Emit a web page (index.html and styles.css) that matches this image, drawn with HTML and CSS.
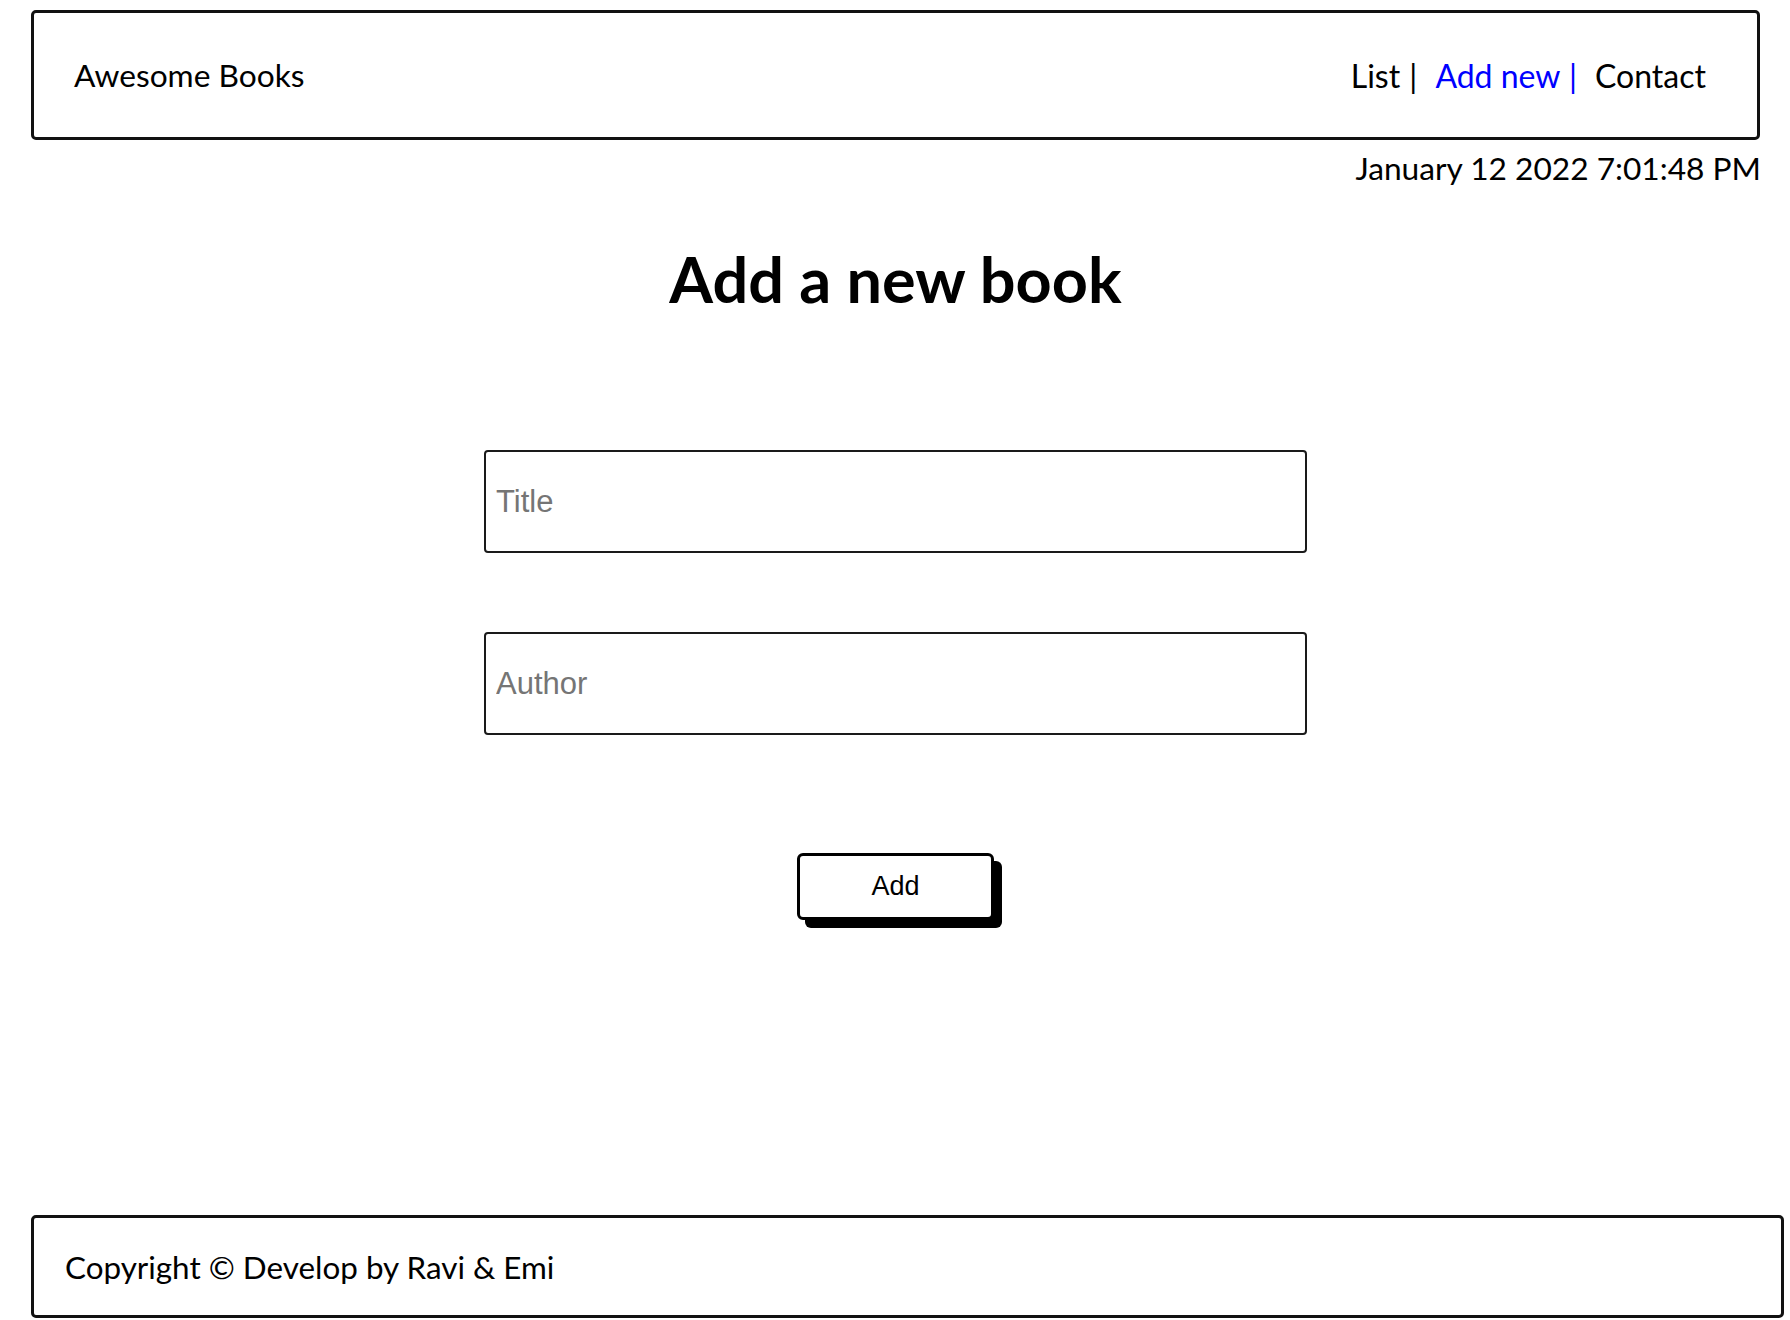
FILE: index.html
```html
<!DOCTYPE html>
<html lang="en">
<head>
<meta charset="utf-8">
<title>Awesome Books</title>
<link rel="stylesheet" href="styles.css">
</head>
<body>
<div class="page">
  <header class="site-header">
    <h2 class="brand">Awesome Books</h2>
    <nav class="nav">
      <a class="nav-link" href="#">List <span class="sep">|</span></a>
      <a class="nav-link active" href="#">Add new <span class="sep">|</span></a>
      <a class="nav-link" href="#">Contact</a>
    </nav>
  </header>
  <p class="date">January 12 2022 7:01:48 PM</p>
  <main class="main">
    <h1 class="title">Add a new book</h1>
    <form class="book-form">
      <input class="field" type="text" placeholder="Title">
      <input class="field" type="text" placeholder="Author">
      <button class="add-btn" type="button">Add</button>
    </form>
  </main>
  <footer class="site-footer">
    <p class="copy">Copyright © Develop by Ravi &amp; Emi</p>
  </footer>
</div>
</body>
</html>
```
FILE: styles.css
```css
* {
  box-sizing: border-box;
}

html, body {
  margin: 0;
  padding: 0;
  background: #fff;
}

body {
  font-family: Lato, "Noto Sans", sans-serif;
  color: #000;
}

.page {
  min-height: 100vh;
  display: flex;
  flex-direction: column;
  padding: 10px 30px 2px 31px;
}

.site-header {
  height: 130px;
  border: 3px solid #111;
  border-radius: 5px;
  display: flex;
  align-items: center;
  justify-content: space-between;
  padding: 0 51px 0 40px;
}

.brand {
  margin: 0;
  font-size: 31.7px;
  font-weight: 400;
}

.nav {
  display: flex;
  align-items: center;
  gap: 18px;
  font-size: 32px;
}

.nav-link {
  color: #000;
  text-decoration: none;
}

.nav-link.active {
  color: #0000ff;
}

.sep {
  margin-left: 1px;
}

.date {
  margin: 10px -1px 0 0;
  text-align: right;
  font-size: 31.7px;
  line-height: 36px;
}

.main {
  flex: 1;
  display: flex;
  flex-direction: column;
  align-items: center;
}

.title {
  margin: 53px 0 0;
  font-size: 63px;
  font-weight: 700;
  line-height: 80px;
}

.book-form {
  display: flex;
  flex-direction: column;
  align-items: center;
  margin-top: 131px;
}

.field {
  width: 823px;
  height: 103px;
  border: 2px solid #1a1a1a;
  border-radius: 4px;
  padding: 0 10px;
  font-family: "Liberation Sans", Arial, sans-serif;
  font-size: 31px;
  color: #000;
  background: #fff;
  margin-bottom: 79px;
}

.field::placeholder {
  color: #757575;
}

.field + .field {
  margin-bottom: 118px;
}

.add-btn {
  width: 197px;
  height: 67px;
  border: 3px solid #000;
  border-radius: 6px;
  background: #fff;
  box-shadow: 8px 8px 0 #000;
  font-family: "Liberation Sans", Arial, sans-serif;
  font-size: 27px;
  color: #000;
  cursor: pointer;
}

.site-footer {
  height: 103px;
  margin-right: -24px;
  border: 3px solid #111;
  border-radius: 5px;
  display: flex;
  align-items: center;
  padding: 0 31px;
}

.copy {
  margin: 0;
  font-size: 31.4px;
}
```
